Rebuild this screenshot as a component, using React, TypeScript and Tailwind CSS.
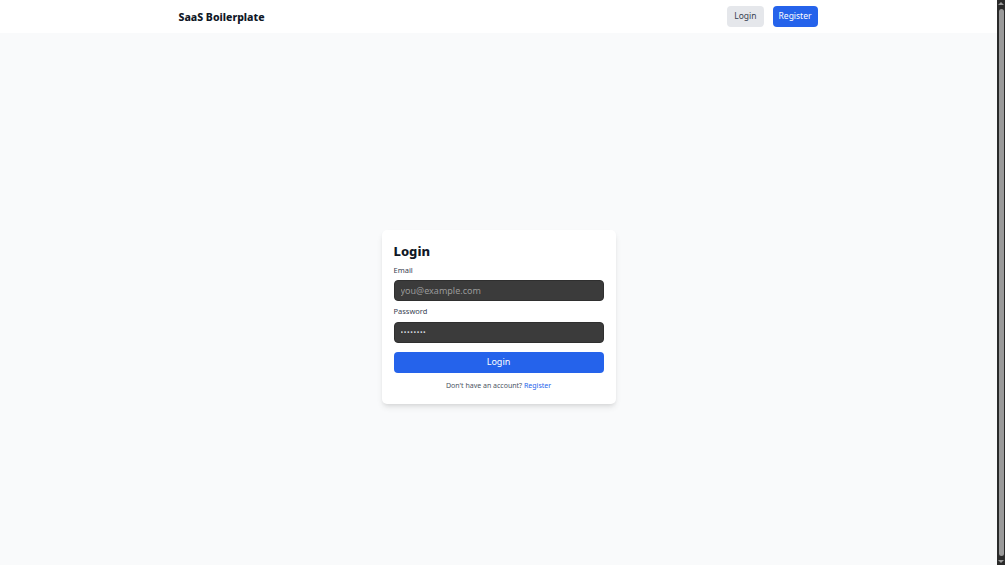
import { useState } from "react";

export default function App() {
  const [email, setEmail] = useState("");
  const [password, setPassword] = useState("password");

  return (
    <div
      className="h-screen flex bg-gray-50 overflow-hidden"
      style={{ fontFamily: '"Noto Sans", "Open Sans", sans-serif' }}
    >
      <div className="flex-1 min-w-0">
        {/* NAV */}
        <nav className="bg-white h-[33px]">
          <div className="max-w-2xl mx-auto px-4 h-full flex items-center justify-between">
            <span className="pt-[2px] text-[10.5px] font-extrabold text-[#111827]">SaaS Boilerplate</span>
            <div className="flex items-center gap-[9px] pr-[1px]">
              <button className="h-[21px] px-[7px] rounded-[4px] bg-[#e5e7eb] text-[#374151] text-[8.5px]">Login</button>
              <button className="h-[21px] px-[6px] rounded-[4px] bg-[#2563eb] text-white text-[8.5px]">Register</button>
            </div>
          </div>
        </nav>

        {/* LOGIN */}
        <main className="min-h-[567px] flex items-center justify-center">
          <div className="w-[234px] bg-white rounded-[5px] shadow-md p-3">
            <h1 className="text-[13px] leading-[18px] font-extrabold text-[#111827]">Login</h1>
            <form className="mt-[5px]" onSubmit={(e) => e.preventDefault()}>
              <label className="block text-[7.5px] leading-[11px] text-[#374151]">Email</label>
              <input
                type="email"
                value={email}
                onChange={(e) => setEmail(e.target.value)}
                placeholder="you@example.com"
                className="mt-[3px] w-full h-[21px] rounded-[4px] bg-[#3b3b3b] border border-[#2f2f2f] px-[6px] text-[9px] text-white placeholder:text-[#9a9a9a] outline-none"
              />
              <label className="block mt-[5px] text-[7.5px] leading-[11px] text-[#374151]">Password</label>
              <input
                type="password"
                value={password}
                onChange={(e) => setPassword(e.target.value)}
                className="mt-[3px] w-full h-[21px] rounded-[4px] bg-[#3b3b3b] border border-[#2f2f2f] px-[6px] text-[7px] tracking-[0.6px] text-gray-300 outline-none"
              />
              <button type="submit" className="mt-[9px] w-full h-[21px] rounded-[4px] bg-[#2563eb] text-white text-[9px]">
                Login
              </button>
            </form>
            <p className="mt-[7px] text-center text-[7px] leading-[12px] text-[#4b5563]">
              Don't have an account? <a href="#" className="text-[#2563eb]">Register</a>
            </p>
          </div>
        </main>
      </div>

      {/* window scrollbar */}
      <div className="w-[8px] shrink-0 bg-[#2a2a2a] flex flex-col items-center py-[2px]">
        <span className="h-0 w-0 border-x-[3px] border-x-transparent border-b-[3px] border-b-[#9a9a9a]" />
        <div className="flex-1 w-[5px] my-[4px] rounded-full bg-[#9a9a9a]" />
        <span className="h-0 w-0 border-x-[3px] border-x-transparent border-t-[3px] border-t-[#9a9a9a]" />
      </div>
    </div>
  );
}
